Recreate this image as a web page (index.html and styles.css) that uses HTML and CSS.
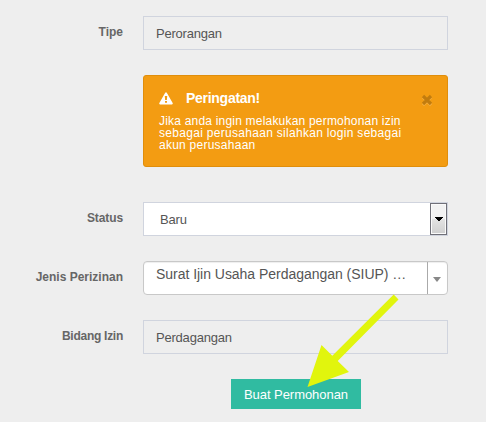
FILE: index.html
```html
<!DOCTYPE html>
<html lang="id">
<head>
<meta charset="utf-8">
<title>Permohonan Izin</title>
<link rel="stylesheet" href="styles.css">
</head>
<body>
<form class="form">
  <div class="row">
    <label class="label"><span class="l-tipe">Tipe</span></label>
    <div class="field readonly"><span class="t-orang">Perorangan</span></div>
  </div>
  <div class="row notice">
    <div class="alert">
      <div class="alert-head">
        <svg class="warn" viewBox="0 0 14 13" width="14" height="13"><path fill="#fff" fill-rule="evenodd" d="M6.2.7Q7 0 7.8.7L13.8 11.2Q13.9 12.3 13 12.4H1Q.1 12.3.2 11.2ZM5.8 4L6.1 8H7.9L8.2 4ZM6 9V10.8H8V9Z"/></svg>
        <strong class="alert-title">Peringatan!</strong>
        <svg class="close" viewBox="0 0 12 12" width="12" height="12"><path d="M2 3L10 11M10 3L2 11" stroke="#f8b54d" stroke-width="3"/><path d="M2 2L10 10M10 2L2 10" stroke="#c27c0e" stroke-width="3.2"/></svg>
      </div>
      <p class="alert-text"><span class="a1">Jika anda ingin melakukan permohonan izin</span><br><span class="a2">sebagai perusahaan silahkan login sebagai</span><br><span class="a3">akun perusahaan</span></p>
    </div>
  </div>
  <div class="row">
    <label class="label"><span class="l-status">Status</span></label>
    <div class="field select"><span class="t-baru">Baru</span>
      <span class="spinner"><svg viewBox="0 0 8 4" width="8" height="4" shape-rendering="crispEdges"><path d="M0 0H8V1H7V2H6V3H5V4H3V3H2V2H1V1H0Z"/></svg></span>
    </div>
  </div>
  <div class="row">
    <label class="label"><span class="l-jenis">Jenis Perizinan</span></label>
    <div class="field combo"><span class="t-surat">Surat Ijin Usaha Perdagangan (SIUP) …</span>
      <span class="toggle"><svg viewBox="0 0 8 5" width="8" height="5"><path fill="#888" d="M0 0H8L4 5Z"/></svg></span>
    </div>
  </div>
  <div class="row">
    <label class="label"><span class="l-bidang">Bidang Izin</span></label>
    <div class="field readonly"><span class="t-dagang">Perdagangan</span></div>
  </div>
  <button class="submit" type="button"><span class="t-buat">Buat Permohonan</span></button>
</form>
<svg class="pointer" viewBox="0 0 486 422" width="486" height="422"><path fill="#e1f50d" d="M393.7 294.5L398.5 299.5L337.7 361L349 372L307.5 387L321.5 345L332.3 355.8Z"/></svg>
</body>
</html>
```
FILE: styles.css
```css
* { box-sizing: border-box; }
body {
  margin: 0;
  width: 486px;
  height: 422px;
  overflow: hidden;
  background: #eee;
  font-family: "Liberation Sans", Arial, sans-serif;
  color: #555;
}
.form {
  display: flex;
  flex-direction: column;
  gap: 25px;
  padding: 16px 38px 0 0;
}
.row { display: flex; justify-content: flex-end; }
.notice { margin-bottom: 10px; }
.label {
  width: 123px;
  margin-right: 20px;
  padding-top: 8px;
  text-align: right;
  font-size: 12px;
  line-height: 16px;
  font-weight: bold;
  color: #666;
  white-space: nowrap;
}
.l-status { letter-spacing: -0.1px; }
.l-bidang { letter-spacing: -0.27px; }
.field {
  display: flex;
  width: 305px;
  height: 34px;
  border: 1px solid #d0d4de;
  background: #fff;
  font-size: 13px;
  line-height: 20px;
  padding: 7px 0 0 12px;
  white-space: nowrap;
}
.readonly { background: #eee; letter-spacing: -0.21px; }
.select { padding: 1px 0 1px 16px; justify-content: space-between; }
.select .t-baru { padding-top: 6px; letter-spacing: -0.2px; }
.spinner {
  display: flex;
  align-items: center;
  justify-content: center;
  width: 17px;
  height: 32px;
  margin-top: -1px;
  border: 1px solid #707078;
  box-shadow: inset 0 0 0 1px #fafafa;
  background: linear-gradient(#f2f2f2 0 48%, #e3e3e3 50%, #cfcfcf);
}
.combo {
  justify-content: space-between;
  padding: 0 0 0 12px;
  border-color: #c8c8c8;
  border-radius: 4px;
  box-shadow: inset 0 1px 1px #eee;
  font-size: 14px;
}
.t-surat { padding-top: 2px; letter-spacing: -0.03px; }
.toggle {
  display: flex;
  align-items: center;
  width: 20px;
  padding-left: 5px;
  border-left: 1px solid #aaa;
}
.toggle svg { margin-top: 2px; }
.alert {
  width: 305px;
  height: 92px;
  padding: 15px 14px 0 15px;
  border: 1px solid #e08e0b;
  border-radius: 3px;
  background: #f39c12;
  color: #fff;
}
.alert-head { display: flex; height: 16px; }
.warn { margin: 1px 13px 0 0; }
.alert-title { font-size: 14px; line-height: 16px; letter-spacing: -0.28px; margin-top: -1px; }
.close { margin: 3px 0 0 auto; }
.alert-text {
  margin: 8px 0 0;
  font-size: 12px;
  line-height: 12px;
  white-space: nowrap;
}
.a1 { letter-spacing: 0.2px; }
.a2 { letter-spacing: 0.3px; }
.a3 { letter-spacing: 0.25px; }
.submit {
  display: flex;
  justify-content: center;
  width: 130px;
  height: 30px;
  margin-left: 231px;
  padding: 6px 0 0;
  border: 0;
  background: #30bba1;
  color: #fff;
  font: 13px/20px "Liberation Sans", Arial, sans-serif;
  letter-spacing: -0.05px;
  white-space: nowrap;
}
.pointer { position: absolute; left: 0; top: 0; pointer-events: none; }
```
